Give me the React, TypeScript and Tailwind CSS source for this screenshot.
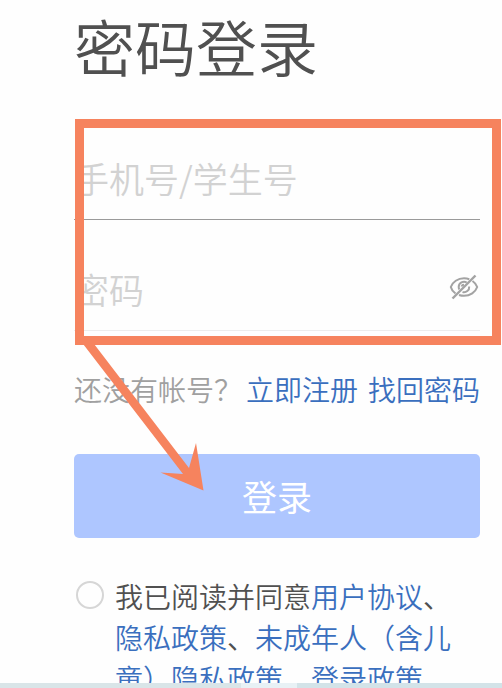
import { useState } from 'react';

const EyeOffIcon = () => (
  <svg width="30" height="26" viewBox="0 0 30 26" fill="none" stroke="#a3a3a3" strokeWidth="2">
    <path d="M6.500 19.500C4 17.600 2.300 15.300 1.800 13C3.600 8 8.800 4.300 15 4.300C16.900 4.300 18.700 4.600 20.300 5.200" />
    <path d="M23.500 7C25.900 8.700 27.500 10.800 28.200 13C26.400 18.200 21.200 21.800 15 21.800C13.200 21.800 11.500 21.500 10 21" />
    <path d="M10.300 15.500C9.900 14.700 9.700 13.900 9.700 13A5.300 5.300 0 0 1 17.800 8.500M20.200 12.500A5.300 5.300 0 0 1 13.500 18.100" />
    <path d="M12.500 12.500A2.600 2.600 0 0 1 15 10.800" />
    <path d="M3.500 24.500L26.500 1.500" strokeWidth="2.400" />
  </svg>
);

const linkStyle = 'text-[#3a6fbe]';

const LoginPage = () => {
  const [showPassword, setShowPassword] = useState(false);

  return (
    <div
      lang="zh-CN"
      className="relative flex h-screen flex-col overflow-hidden bg-[#fefefe] font-['Noto_Sans_CJK_SC',sans-serif] font-[350]"
    >
      <main className="min-h-0 flex-1 overflow-hidden pl-[74px] pr-[22px]">
        <h1 className="h-[109px] pt-[6px] text-[61px] leading-[80px] text-[#505050]">密码登录</h1>

        <form onSubmit={(e) => e.preventDefault()}>
          <div className="flex h-[111px] items-center border-b border-[#9a9a9a] pt-7">
            <input
              type="text"
              aria-label="手机号/学生号"
              placeholder="手机号/学生号"
              className="w-full min-w-0 bg-transparent text-[35px] leading-[48px] outline-none placeholder:text-[#d2d2d2]"
            />
          </div>
          <div className="flex h-[111px] items-center border-b border-[#ececec] pt-7">
            <input
              type={showPassword ? 'text' : 'password'}
              aria-label="密码"
              placeholder="密码"
              className="w-full min-w-0 flex-1 bg-transparent text-[35px] leading-[48px] outline-none placeholder:text-[#d2d2d2]"
            />
            <button
              type="button"
              aria-label="显示密码"
              className="mb-1 mr-px"
              onClick={() => setShowPassword(!showPassword)}
            >
              <EyeOffIcon />
            </button>
          </div>

          <div className="mt-[37px] flex justify-between whitespace-nowrap text-[28px] leading-[42px]">
            <span className="text-[#a0a0a0]">还没有帐号？</span>
            <span className="flex gap-2.5">
              <a href="#register" className={linkStyle}>
                立即注册
              </a>
              <a href="#recover" className={linkStyle}>
                找回密码
              </a>
            </span>
          </div>

          <button
            type="submit"
            className="mt-[44px] h-[84px] w-full rounded-[5px] bg-[#aec6ff] text-[35px] font-normal text-white"
          >
            登录
          </button>

          <div className="mt-[38px] flex items-start text-[28px] leading-[41px] text-[#505050]">
            <input
              id="agree"
              type="checkbox"
              className="ml-[2px] mr-[11px] mt-[5px] size-7 shrink-0 appearance-none rounded-full border-2 border-[#d6d6d6] checked:bg-[#aec6ff]"
            />
            <label htmlFor="agree" className="pr-5">
              我已阅读并同意
              <a href="#terms" className={linkStyle}>用户协议</a>、
              <a href="#privacy" className={linkStyle}>隐私政策</a>、
              <a href="#minors" className={linkStyle}>未成年人（含儿童）隐私政策</a>、
              <a href="#login-policy" className={linkStyle}>登录政策</a>
            </label>
          </div>
        </form>
      </main>

      <div className="flex h-[5px] shrink-0">
        <div className="w-[241px] bg-[#d9e5e8]" />
        <div className="w-14 bg-[#e8f1f5]" />
        <div className="flex-1 bg-[#d3e3e8]" />
      </div>

      {/* highlight box and arrow over the form */}
      <div className="pointer-events-none absolute left-[75px] right-px top-[119px] h-[226px] border-[9px] border-[#f6835e]" />
      <svg
        className="pointer-events-none absolute left-[75px] top-[340px]"
        width="140"
        height="160"
        viewBox="75 340 140 160"
        fill="#f6835e"
      >
        <path d="M80 340L91 340L189 468L196 443L203.500 490.500L160.500 472.500L183 474Z" />
      </svg>
    </div>
  );
};

export default LoginPage;
